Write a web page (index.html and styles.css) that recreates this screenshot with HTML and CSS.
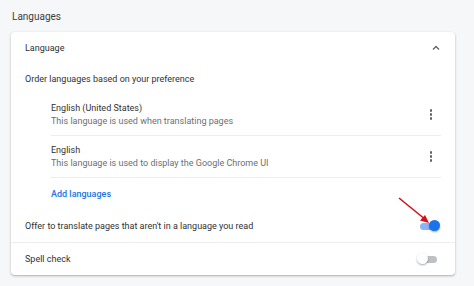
FILE: index.html
```html
<!DOCTYPE html>
<html lang="en">
<head>
    <meta charset="UTF-8">
    <title>Languages</title>
    <link rel="stylesheet" href="styles.css">
</head>
<body>
    <div class="page">
        <h2 class="title">Languages</h2>
        <div class="card">
            <div class="row header">
                <span>Language</span>
                <svg class="chevron" width="10" height="10" viewBox="0 0 10 10"><path d="M2 6.5 L5 3.5 L8 6.5" fill="none" stroke="#5f6368" stroke-width="1.3"/></svg>
            </div>
            <div class="row plain">Order languages based on your preference</div>
            <div class="list">
                <div class="item">
                    <div class="text">
                        <div class="name">English (United States)</div>
                        <div class="desc">This language is used when translating pages</div>
                    </div>
                    <span class="dots"><i></i><i></i><i></i></span>
                </div>
                <div class="item">
                    <div class="text">
                        <div class="name">English</div>
                        <div class="desc">This language is used to display the Google Chrome UI</div>
                    </div>
                    <span class="dots"><i></i><i></i><i></i></span>
                </div>
                <div class="add">Add languages</div>
            </div>
            <div class="row toggle-row">
                <span>Offer to translate pages that aren't in a language you read</span>
                <span class="toggle on"><span class="knob"></span></span>
                <svg class="arrow" width="40" height="34" viewBox="0 0 40 34"><line x1="2" y1="2" x2="29" y2="24" stroke="#d0121b" stroke-width="1.6"/><path d="M32 27 L23 24.5 L28 19 Z" fill="#d0121b"/></svg>
            </div>
            <div class="row toggle-row last">
                <span>Spell check</span>
                <span class="toggle"><span class="knob"></span></span>
            </div>
        </div>
    </div>
</body>
</html>
```
FILE: styles.css
```css
body {
    margin: 0;
    background-color: #f6f7f9;
    font-family: Roboto, "Liberation Sans", sans-serif;
    font-size: 9px;
    color: #303134;
}
.page {
    padding: 10px 19px 13px 11px;
}
.title {
    margin: 0 0 8px 1px;
    font-size: 10px;
    font-weight: 400;
    color: #3c4043;
    line-height: 14px;
}
.card {
    background: white;
    border-radius: 4px;
    box-shadow: 0 1px 2px rgba(60, 64, 67, 0.3), 0 1px 3px rgba(60, 64, 67, 0.12);
}
.row {
    display: flex;
    align-items: center;
    justify-content: space-between;
    padding: 0 14px;
    position: relative;
}
.header {
    height: 32px;
    padding-right: 14px;
}
.plain {
    height: 30px;
}
.list {
    padding: 0 14px 0 40px;
}
.item {
    display: flex;
    align-items: center;
    justify-content: space-between;
    height: 41px;
    border-bottom: 1px solid #eceef0;
}
.name {
    line-height: 13px;
}
.desc {
    color: #6b6f74;
    line-height: 13px;
}
.dots {
    display: flex;
    flex-direction: column;
    gap: 1.5px;
    margin-right: 9px;
}
.dots i {
    display: block;
    width: 2.5px;
    height: 2.5px;
    border-radius: 50%;
    background: #5f6368;
}
.add {
    height: 32px;
    line-height: 32px;
    color: #1a73e8;
    font-weight: 500;
}
.toggle-row {
    height: 32px;
    border-bottom: 1px solid #eceef0;
}
.toggle-row.last {
    border-bottom: none;
}
.toggle {
    position: relative;
    width: 17px;
    height: 7px;
    border-radius: 4px;
    background: #bdc1c6;
    margin-right: 4px;
}
.toggle .knob {
    position: absolute;
    left: -3px;
    top: -2.5px;
    width: 11px;
    height: 11px;
    border-radius: 50%;
    background: white;
    box-shadow: 0 1px 2px rgba(0, 0, 0, 0.35);
}
.toggle.on {
    background: #8ab4f8;
}
.toggle.on .knob {
    left: 9px;
    background: #1a73e8;
}
.arrow {
    position: absolute;
    right: 18px;
    top: -14px;
}
```
